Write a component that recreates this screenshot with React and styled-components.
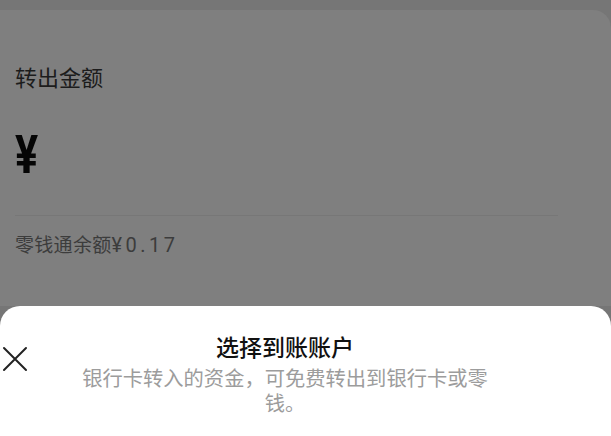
import React from 'react';
import styled, { createGlobalStyle } from 'styled-components';

const GlobalStyle = createGlobalStyle`
  html, body {
    margin: 0;
    padding: 0;
    background: #767676;
    overflow: hidden;
  }

  body {
    font-family: Roboto, "Noto Sans CJK SC", sans-serif;
  }
`;

const Screen = styled.div`
  height: 436px;
  display: flex;
  flex-direction: column;
`;

const Card = styled.div`
  margin-top: 10px;
  height: 296px;
  background: #7f7f7f;
  border-top-right-radius: 18px;
  padding: 0 53px 0 15px;
  display: flex;
  flex-direction: column;
`;

const Label = styled.div`
  margin-top: 54px;
  font-size: 22px;
  line-height: 30px;
  color: #1c1c1c;
`;

const Amount = styled.div`
  margin-top: 34px;
  height: 54px;
  font-size: 54px;
  line-height: 54px;
  font-weight: 700;
  color: #050505;
  transform: scaleX(0.8);
  transform-origin: left center;
`;

const Divider = styled.div`
  margin-top: 33px;
  height: 1px;
  background: #777;
`;

const Balance = styled.div`
  margin-top: 15px;
  font-size: 19px;
  line-height: 28px;
  color: #3c3c3c;
  letter-spacing: 0.3px;
`;

const Num = styled.span`
  font-size: 20px;
  letter-spacing: 3.5px;
`;

const Sheet = styled.div`
  flex: 1;
  background: #fff;
  border-radius: 20px 20px 0 0;
  padding-top: 28px;
  display: grid;
  grid-template-columns: 40px 490px;
  align-items: start;
`;

const Close = styled.button`
  margin-top: 12px;
  margin-left: 2px;
  width: 26px;
  height: 26px;
  padding: 0;
  border: none;
  background: none;
  display: flex;
  align-items: center;
  justify-content: center;
`;

const Texts = styled.div`
  display: flex;
  flex-direction: column;
  align-items: center;
  text-align: center;
`;

const Title = styled.div`
  font-size: 23px;
  line-height: 30px;
  font-weight: 500;
  color: #111;
`;

const Subtitle = styled.div`
  margin-top: 3px;
  max-width: 425px;
  font-size: 20.3px;
  line-height: 25px;
  color: #9c9c9c;
`;

export default function App() {
  return (
    <Screen>
      <GlobalStyle />
      <Card>
        <Label>转出金额</Label>
        <Amount>¥</Amount>
        <Divider />
        <Balance>
          零钱通余额<Num>¥0.17</Num>
        </Balance>
      </Card>
      <Sheet>
        <Close aria-label="关闭">
          <svg width="26" height="26" viewBox="0 0 26 26">
            <path d="M2 2 L24 24 M24 2 L2 24" stroke="#222" strokeWidth="2" strokeLinecap="round" />
          </svg>
        </Close>
        <Texts>
          <Title>选择到账账户</Title>
          <Subtitle>银行卡转入的资金，可免费转出到银行卡或零钱。</Subtitle>
        </Texts>
      </Sheet>
    </Screen>
  );
}
